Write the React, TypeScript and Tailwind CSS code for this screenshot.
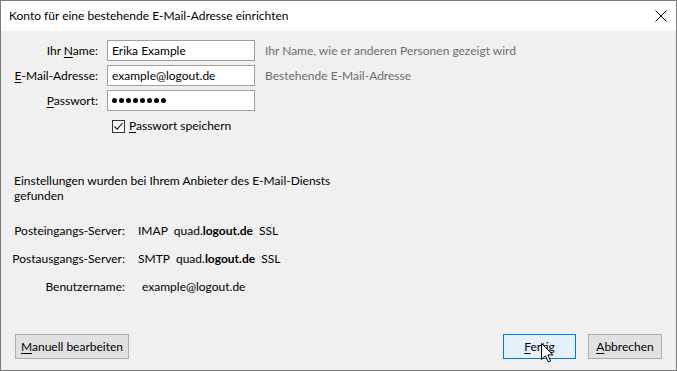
import React from "react";

const font = { fontFamily: '"Segoe UI", Lato, "Noto Sans", sans-serif' };

function U({ children }: { children: React.ReactNode }) {
  return <span className="underline underline-offset-2">{children}</span>;
}

function Cursor() {
  return (
    <svg className="absolute left-[540px] top-[342px]" width="13" height="20" viewBox="0 0 13 20">
      <path
        d="M0.5 0.5 L0.5 16.5 L4.5 12.8 L7.3 19 L9.6 18 L6.9 11.9 L12 11.9 Z"
        fill="#fff"
        stroke="#000"
        strokeWidth="1"
        strokeLinejoin="miter"
      />
    </svg>
  );
}

export default function App() {
  return (
    <div
      className="relative w-[677px] h-[371px] flex flex-col bg-[#f0f0f0] border border-[#7a7a7a] text-[12px] text-[#000] overflow-hidden"
      style={font}
    >
      {/* Title bar */}
      <div className="h-[30px] bg-white flex items-center justify-between pl-[8px] pr-[8px] shrink-0">
        <span className="text-[12px]">Konto für eine bestehende E-Mail-Adresse einrichten</span>
        <svg width="12" height="12" viewBox="0 0 12 12" className="mr-[1px]">
          <path d="M0.5 0.5 L11.5 11.5 M11.5 0.5 L0.5 11.5" stroke="#000" strokeWidth="1" />
        </svg>
      </div>

      {/* Form */}
      <div className="flex flex-col pt-[9px]">
        <div className="grid grid-cols-[97px_148px_1fr] gap-x-[9px] gap-y-[4px] items-center">
          <div className="text-right">
            Ihr <U>N</U>ame:
          </div>
          <div className="h-[21px] bg-white border border-[#a0a0a0] flex items-center pl-[4px]">Erika Example</div>
          <div className="text-[#6d6d6d] pl-[1px]">Ihr Name, wie er anderen Personen gezeigt wird</div>

          <div className="text-right">
            <U>E</U>-Mail-Adresse:
          </div>
          <div className="h-[21px] bg-white border border-[#a0a0a0] flex items-center pl-[4px]">example@logout.de</div>
          <div className="text-[#6d6d6d] pl-[1px]">Bestehende E-Mail-Adresse</div>

          <div className="text-right">
            <U>P</U>asswort:
          </div>
          <div className="h-[21px] bg-white border border-[#a0a0a0] flex items-center pl-[4px] gap-[2px]">
            {Array.from({ length: 8 }).map((_, i) => (
              <span key={i} className="w-[5px] h-[5px] rounded-full bg-black" />
            ))}
          </div>
          <div />
        </div>

        <div className="flex items-center pl-[111px] mt-[6px] gap-[4px]">
          <div className="w-[13px] h-[13px] bg-white border border-[#333] flex items-center justify-center">
            <svg width="11" height="11" viewBox="0 0 11 11">
              <path d="M1.5 5.5 L4.2 8.3 L9.5 2" stroke="#000" strokeWidth="1.1" fill="none" />
            </svg>
          </div>
          <span>
            <U>P</U>asswort speichern
          </span>
        </div>
      </div>

      {/* Found settings */}
      <div className="pl-[13px] mt-[38px] leading-[15px]">
        Einstellungen wurden bei Ihrem Anbieter des E-Mail-Diensts
        <br />
        gefunden
      </div>

      <div className="grid grid-cols-[124px_1fr] gap-x-[13px] gap-y-[13px] mt-[20px] leading-[15px]">
        <div className="text-right pl-[2px]">Posteingangs-Server:</div>
        <div className="flex gap-[6px]">
          <span>IMAP</span>
          <span>
            quad.<b>logout.de</b>
          </span>
          <span>SSL</span>
        </div>
        <div className="text-right">Postausgangs-Server:</div>
        <div className="flex gap-[6px]">
          <span>SMTP</span>
          <span>
            quad.<b>logout.de</b>
          </span>
          <span>SSL</span>
        </div>
        <div className="text-right">Benutzername:</div>
        <div className="pl-[4px]">example@logout.de</div>
      </div>

      {/* Buttons */}
      <div className="mt-auto mb-[11px] flex items-center px-[14px]">
        <button className="h-[25px] px-[5px] bg-[#e1e1e1] border border-[#adadad] text-[12px]" style={font}>
          <U>M</U>anuell bearbeiten
        </button>
        <div className="flex-1" />
        <button
          className="h-[25px] w-[73px] bg-[#e5f1fb] border border-[#0078d7] text-[12px] mr-[12px]"
          style={font}
        >
          <U>F</U>ertig
        </button>
        <button className="h-[25px] w-[74px] bg-[#e1e1e1] border border-[#adadad] text-[12px]" style={font}>
          <U>A</U>bbrechen
        </button>
      </div>

      <Cursor />
    </div>
  );
}
